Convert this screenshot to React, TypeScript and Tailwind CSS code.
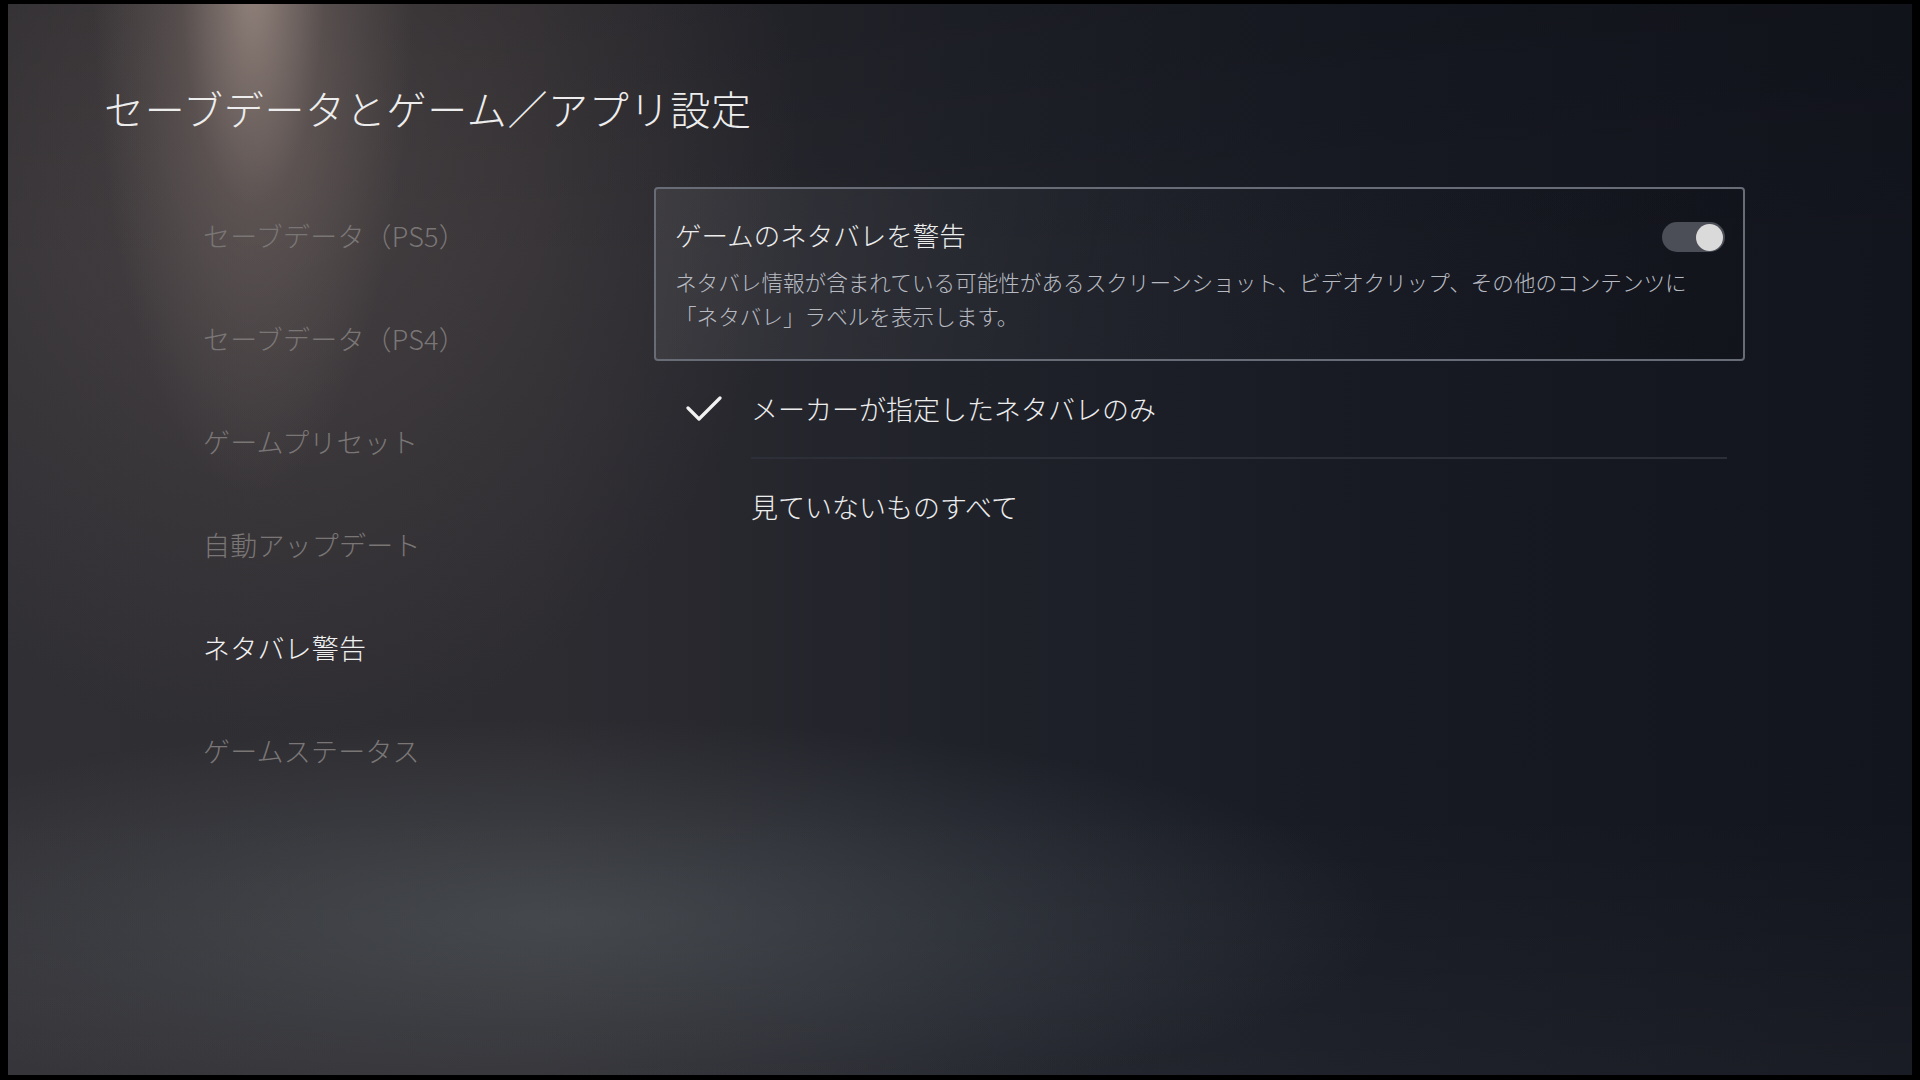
import React from "react";

const font = "font-['Noto_Sans_CJK_JP','Noto_Sans',sans-serif]";

const menu = [
  { label: "セーブデータ（PS5）", active: false },
  { label: "セーブデータ（PS4）", active: false },
  { label: "ゲームプリセット", active: false },
  { label: "自動アップデート", active: false },
  { label: "ネタバレ警告", active: true },
  { label: "ゲームステータス", active: false },
];

function Check() {
  return (
    <svg width="36" height="26" viewBox="0 0 36 26" className="shrink-0">
      <polyline
        points="2,12 13,23 34,2"
        fill="none"
        stroke="#f2f2f2"
        strokeWidth="3.2"
        strokeLinecap="round"
        strokeLinejoin="round"
      />
    </svg>
  );
}

export default function App() {
  return (
    <div className={`w-[1920px] h-[1080px] bg-black pt-[4px] pl-[8px] overflow-hidden ${font}`}>
      <div className="w-[1904px] h-[1071px] flex flex-col bg-[radial-gradient(ellipse_160px_520px_at_245px_-30px,rgba(180,160,150,0.72),rgba(140,124,118,0.32)_45%,transparent_100%),radial-gradient(ellipse_520px_600px_at_270px_140px,rgba(108,94,90,0.40),transparent_100%),radial-gradient(ellipse_820px_200px_at_560px_915px,rgba(98,108,112,0.42),transparent_100%),linear-gradient(180deg,rgba(0,0,0,0.12)_0%,transparent_25%,transparent_75%,rgba(255,255,255,0.03)_100%),linear-gradient(90deg,#302f34_0%,#2d2c31_28%,#20222a_50%,#171a23_72%,#13151e_100%)]">
        {/* Header */}
        <div className="pl-[96px] pt-[76px] h-[180px]">
          <h1 className="text-[40px] leading-[56px] font-light text-[#ededed] tracking-[0.7px]">
            セーブデータとゲーム／アプリ設定
          </h1>
        </div>

        {/* Body */}
        <div className="flex">
          {/* Left menu */}
          <div className="w-[646px] pl-[195px] flex flex-col">
            {menu.map((m) => (
              <div key={m.label} className="h-[103px] flex items-center">
                <span
                  className={`text-[27px] leading-[36px] font-light tracking-[0.2px] ${
                    m.active ? "text-[#f0f0f0]" : "text-[#7a7676]"
                  }`}
                >
                  {m.label}
                </span>
              </div>
            ))}
          </div>

          {/* Right column */}
          <div className="w-[1091px] flex flex-col">
            <div className="mt-[3px] h-[174px] rounded-[4px] border-2 border-[#686c76] bg-[linear-gradient(100deg,rgba(255,255,255,0.07)_0%,rgba(255,255,255,0.02)_40%,rgba(0,0,0,0.12)_100%)] pt-[28px] pl-[19px] pr-[18px] pb-[26px] flex flex-col">
              <div className="flex items-center justify-between h-[36px]">
                <span className="text-[26.5px] leading-[36px] font-light text-[#ececec]">
                  ゲームのネタバレを警告
                </span>
                <div className="w-[63px] h-[30px] mt-[4px] rounded-full bg-[#4b4e57] flex items-center justify-end pr-[2px]">
                  <div className="w-[27px] h-[27px] rounded-full bg-[#dadada]" />
                </div>
              </div>
              <p className="mt-[12px] text-[21.6px] leading-[34px] font-light text-[#b7bac1] whitespace-nowrap">
                ネタバレ情報が含まれている可能性があるスクリーンショット、ビデオクリップ、その他のコンテンツに
                <br />
                「ネタバレ」ラベルを表示します。
              </p>
            </div>

            <div className="h-[96px] flex items-center pl-[32px]">
              <Check />
              <span className="ml-[29px] text-[27px] leading-[36px] font-light text-[#ededed]">
                メーカーが指定したネタバレのみ
              </span>
            </div>
            <div className="ml-[97px] mr-[18px] h-[2px] bg-[#2c2f37]" />
            <div className="h-[96px] flex items-center pl-[97px]">
              <span className="text-[27px] leading-[36px] font-light text-[#ededed]">
                見ていないものすべて
              </span>
            </div>
          </div>
        </div>
      </div>
    </div>
  );
}
